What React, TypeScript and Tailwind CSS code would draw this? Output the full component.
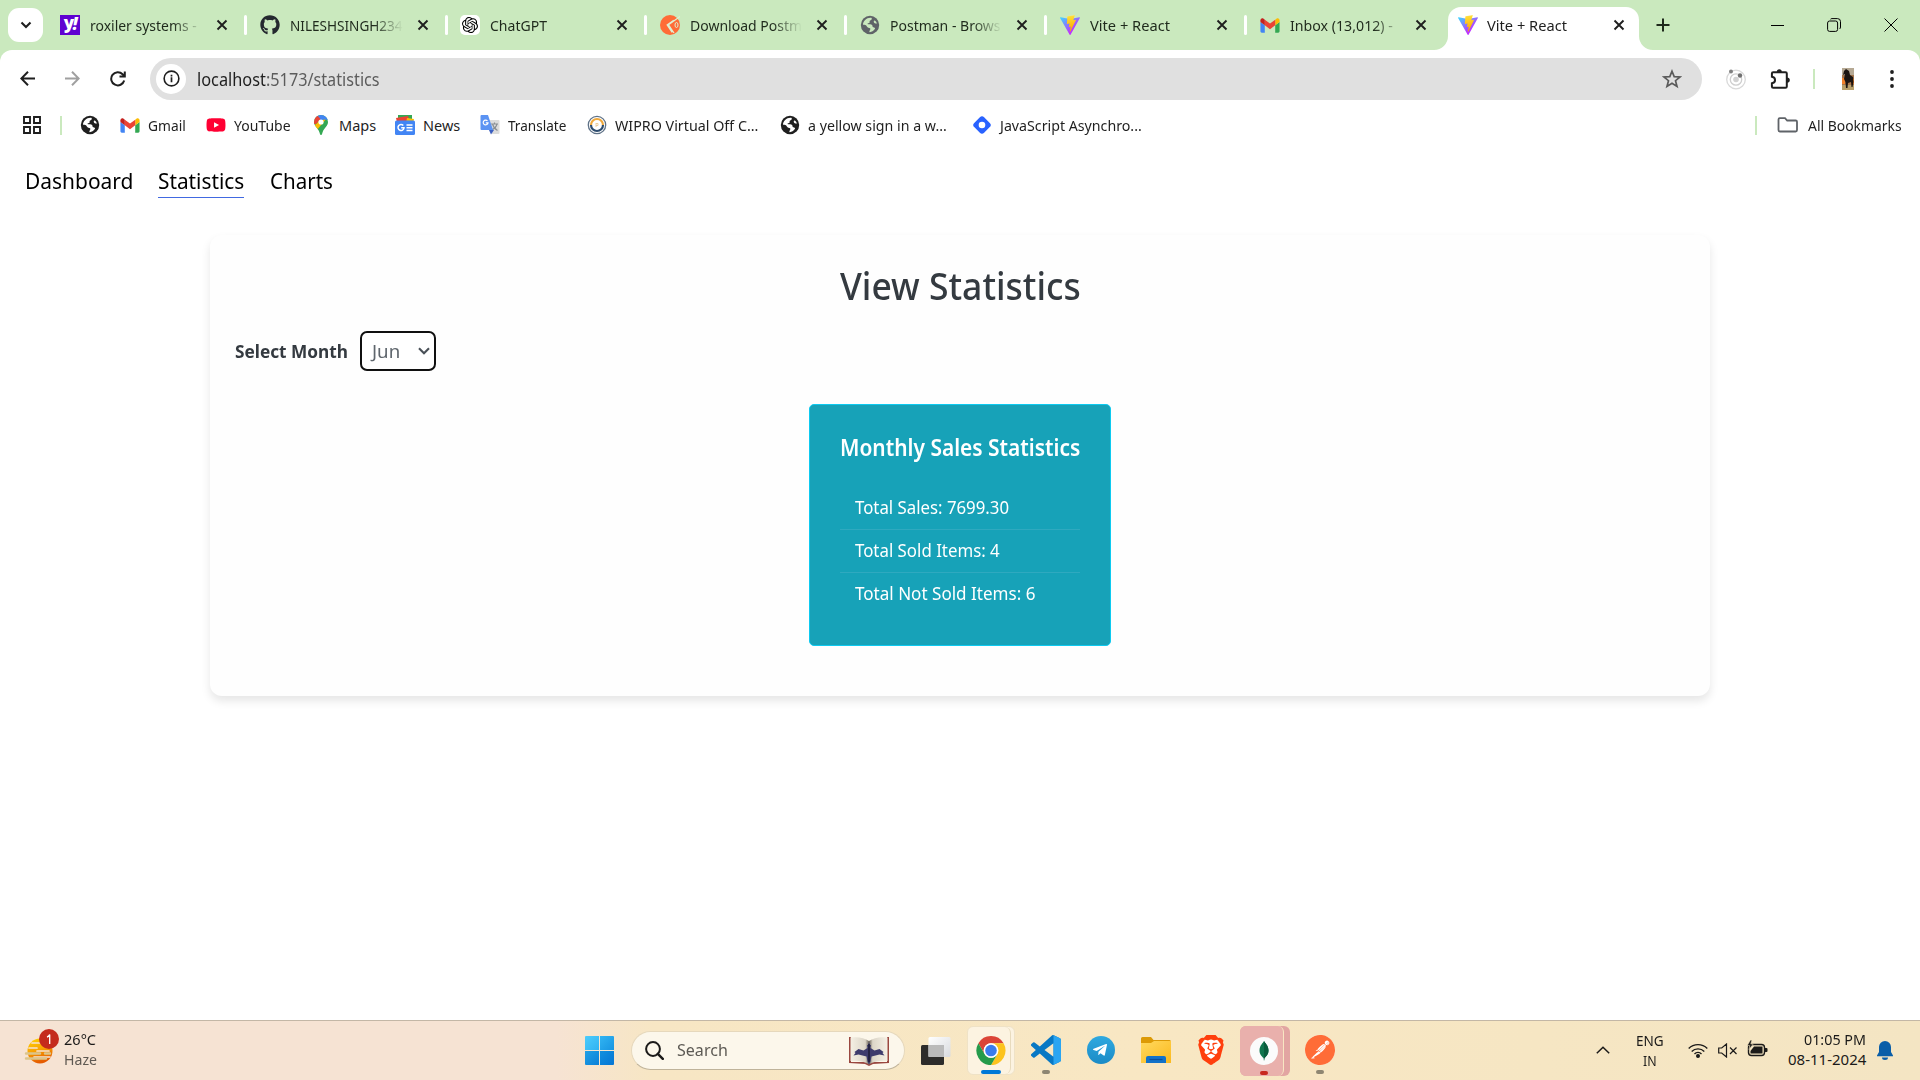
import React, { useLayoutEffect, useRef, useState } from "react";
import { FaGithub, FaTelegramPlane, FaYoutube } from "react-icons/fa";
import { SiOpenai, SiBrave, SiPostman } from "react-icons/si";

/* Single line of text condensed or stretched to an exact width. */
function Fit({ w, className = "", children }: { w: number; className?: string; children: string }) {
  const ref = useRef<HTMLSpanElement>(null);
  const [k, setK] = useState(1);
  useLayoutEffect(() => {
    if (ref.current && ref.current.offsetWidth) setK(w / ref.current.offsetWidth);
  }, [w, children]);
  return (
    <span className={`block shrink-0 whitespace-nowrap ${className}`} style={{ width: w }}>
      <span ref={ref} className="inline-block origin-left" style={{ transform: `scaleX(${k})` }}>
        {children}
      </span>
    </span>
  );
}

const Vite = () => (
  <svg viewBox="0 0 256 257" className="h-5 w-5">
    <defs>
      <linearGradient id="va" x1="-.8%" x2="57.6%" y1="7.6%" y2="78.4%">
        <stop offset="0" stopColor="#41D1FF" />
        <stop offset="1" stopColor="#BD34FE" />
      </linearGradient>
      <linearGradient id="vb" x1="43%" x2="50%" y1="2%" y2="89%">
        <stop offset="0" stopColor="#FFEA83" />
        <stop offset=".08" stopColor="#FFDD35" />
        <stop offset="1" stopColor="#FFA800" />
      </linearGradient>
    </defs>
    <path fill="url(#va)" d="M255.153 37.938L134.897 252.976c-2.483 4.44-8.862 4.466-11.382.048L.875 37.958c-2.746-4.814 1.371-10.646 6.827-9.67l120.385 21.517a6.537 6.537 0 0 0 2.322-.004l117.867-21.483c5.438-.991 9.574 4.796 6.877 9.62Z" />
    <path fill="url(#vb)" d="M185.432.063L96.44 17.501a3.268 3.268 0 0 0-2.634 3.014l-5.474 92.456a3.268 3.268 0 0 0 3.997 3.378l24.777-5.718c2.318-.535 4.413 1.507 3.936 3.838l-7.361 36.047c-.495 2.426 1.782 4.5 4.151 3.78l15.304-4.649c2.372-.72 4.652 1.36 4.15 3.788l-11.698 56.621c-.732 3.542 3.979 5.473 5.943 2.437l1.313-2.028l72.516-144.72c1.215-2.423-.88-5.186-3.54-4.672l-25.505 4.922c-2.396.462-4.435-1.77-3.759-4.114l16.646-57.705c.677-2.35-1.37-4.583-3.769-4.113Z" />
  </svg>
);

const GmailIcon = () => (
  <svg viewBox="50 42 92 66" className="h-[15px] w-5">
    <path fill="#4285f4" d="M58 108h14V74L52 59v43c0 3.32 2.69 6 6 6" />
    <path fill="#34a853" d="M120 108h14c3.32 0 6-2.69 6-6V59l-20 15" />
    <path fill="#fbbc04" d="M120 48v26l20-15v-8c0-7.42-8.47-11.65-14.4-7.2" />
    <path fill="#ea4335" d="M72 74V48l24 18 24-18v26L96 92" />
    <path fill="#c5221f" d="M52 51v8l20 15V48l-5.6-4.2c-5.94-4.45-14.4-.22-14.4 7.2" />
  </svg>
);

const Globe = ({ fill, land }: { fill: string; land: string }) => (
  <svg viewBox="0 0 20 20" className="h-5 w-5">
    <circle cx="10" cy="10" r="9.2" fill={fill} />
    <path
      fill={land}
      d="M11.3 2.8C12.1 3.3 12 4.6 11 5.1 9.8 5.6 9.5 6.1 9.6 7c.1.8-.4 1.2-1.2 1.2-.9 0-1 .6-.4 1 .6.3 1.9 0 3 .2 1.300.2 1.500.9 1.500 1.900 0 .9.6 1 1.500 1.100 1 .1 1.300.8.800 1.700-1.200 1.700-3.100 3-5 3.100-.8-.5-.4-1.500.2-2.300.7-.9.4-1.600-.6-1.900C7.700 12.600 7.200 11.900 6.600 11 5.700 9.800 4.100 9.700 3 9.800 2.900 6.200 6.800 2.300 11.300 2.800Z"
    />
    <path fill={land} d="M14.300 5.500c1.100.2 2.200 1.600 2.600 3-.8.3-2.500 0-2.900-.9-.3-.8-.5-1.700.3-2.100Z" />
  </svg>
);

const Yahoo = () => (
  <span className="flex h-5 w-5 items-center justify-center bg-[#5f01d1] font-['Open_Sans',sans-serif] text-[17px] leading-none font-extrabold tracking-[-1.5px] text-white">
    <span className="-mt-[5px]">y</span>
    <span className="-mt-[3px] italic">!</span>
  </span>
);

const CloseX = () => (
  <svg viewBox="0 0 12 12" className="h-3 w-3 shrink-0">
    <path d="M1.500 1.500l9 9M10.500 1.500l-9 9" stroke="#1f1f1f" strokeWidth="1.900" />
  </svg>
);

const PostmanTab = () => (
  <svg viewBox="0 0 20 20" className="h-5 w-5">
    <circle cx="10" cy="10" r="10" fill="#ff6c37" />
    <path d="M20 1.500L8.500 9.800l5.500 8.200M13.800 5.300L7.200 9.800l5 7.500" stroke="#e0f0d2" strokeWidth="1.300" fill="none" />
    <ellipse cx="16.500" cy="10" rx="1.500" ry="2.500" stroke="#e0f0d2" strokeWidth="1" fill="none" />
  </svg>
);

function Tab({ icon, title, w, sep = true, fade = false }: { icon: React.ReactNode; title: string; w: number; sep?: boolean; fade?: boolean }) {
  return (
    <div className="flex h-[50px] w-[200px] shrink-0 items-center pl-[13px]">
      <span className="flex h-5 w-5 shrink-0 items-center justify-center">{icon}</span>
      <div className={fade ? "ml-[10px] w-[113px] [mask-image:linear-gradient(to_right,#000_74%,transparent)]" : "ml-[10px] w-[113px]"}>
        <Fit w={w} className="text-[15px] leading-[22px] text-[#1f2a1c]">{title}</Fit>
      </div>
      <span className={sep ? "ml-[14px] flex" : "ml-[12px] flex"}><CloseX /></span>
      {sep && <span className="ml-[16px] h-5 w-[3px] shrink-0 rounded-full bg-white" />}
    </div>
  );
}

function Bookmark({ icon, title, w, gap }: { icon: React.ReactNode; title: string; w: number; gap: string }) {
  return (
    <div className={`flex shrink-0 items-center ${gap}`}>
      <span className="flex h-5 w-5 items-center justify-center">{icon}</span>
      <Fit w={w} className="ml-2 text-[14.500px] leading-[20px] text-[#1f1f1f]">{title}</Fit>
    </div>
  );
}

function BrowserTabs() {
  return (
    <div className="flex h-[50px] bg-[#cae9be]">
      <div className="flex w-[47px] shrink-0 items-center pl-2">
        <div className="flex h-[34px] w-[35px] items-center justify-center rounded-[11px] bg-white">
          <svg viewBox="0 0 12 8" className="h-2 w-3"><path d="M1.500 1.500L6 6l4.500-4.500" stroke="#1f1f1f" strokeWidth="2.100" fill="none" /></svg>
        </div>
      </div>
      <Tab icon={<Yahoo />} title="roxiler systems -" w={107} fade />
      <Tab icon={<FaGithub className="h-5 w-5 text-[#24292f]" />} title="NILESHSINGH234" w={113} fade />
      <Tab icon={<span className="flex h-5 w-5 items-center justify-center rounded-[5px] bg-white"><SiOpenai className="h-4 w-4 text-black" /></span>} title="ChatGPT" w={57} />
      <Tab icon={<PostmanTab />} title="Download Postm" w={112} fade />
      <Tab icon={<Globe fill="#5f6368" land="#cae9be" />} title="Postman - Brows" w={111} fade />
      <Tab icon={<Vite />} title="Vite + React" w={80} />
      <Tab icon={<GmailIcon />} title="Inbox (13,012) -" w={103} sep={false} fade />
      <div className="relative mt-[7px] ml-px flex h-[43px] w-[191px] shrink-0 items-center rounded-t-[13px] bg-white pb-[7px] pl-[10px]">
        <svg viewBox="0 0 14 14" className="absolute bottom-0 -left-[14px] h-[14px] w-[14px]"><path d="M14 0v14H0A14 14 0 0 0 14 0Z" fill="#fff" /></svg>
        <svg viewBox="0 0 14 14" className="absolute -right-[14px] bottom-0 h-[14px] w-[14px]"><path d="M0 0v14h14A14 14 0 0 1 0 0Z" fill="#fff" /></svg>
        <Vite />
        <Fit w={80} className="ml-[9px] text-[15px] leading-[22px] text-[#1f1f1f]">Vite + React</Fit>
        <span className="ml-[46px] flex"><CloseX /></span>
      </div>
      <div className="flex w-[48px] items-center justify-center">
        <svg viewBox="0 0 14 14" className="h-[14px] w-[14px]"><path d="M7 .5v13M.5 7h13" stroke="#1f2a1c" strokeWidth="2" /></svg>
      </div>
      <div className="ml-auto flex items-center gap-[43px] pr-[22px]">
        <span className="h-px w-[13px] bg-black" />
        <svg viewBox="0 0 14 14" className="h-[14px] w-[14px]" fill="none" stroke="#000"><rect x=".6" y="3" width="10" height="10.400" rx="2" /><path d="M3.500 1.200Q4 .6 5 .6h5.500a3 3 0 0 1 3 3V9q0 1.400-1 2" /></svg>
        <svg viewBox="0 0 14 14" className="h-[14px] w-[14px]" stroke="#000"><path d="M.5.5l13 13M13.500.5l-13 13" /></svg>
      </div>
    </div>
  );
}

function Toolbar() {
  return (
    <div className="bg-[#cae9be]">
      <div className="flex h-[58px] items-center rounded-t-[12px] bg-white pb-px pl-5">
        <svg viewBox="0 0 15 15" className="h-[15px] w-[15px]" fill="none" stroke="#1f1f1f" strokeWidth="2"><path d="M15 7.500H1.500M8 .8L1.300 7.500 8 14.200" /></svg>
        <svg viewBox="0 0 15 15" className="ml-[30px] h-[15px] w-[15px]" fill="none" stroke="#a0a0a0" strokeWidth="2"><path d="M0 7.500h13.500M7 .8l6.700 6.700L7 14.200" /></svg>
        <svg viewBox="0 0 16 16" className="ml-[30px] h-4 w-4" fill="none" stroke="#1f1f1f" strokeWidth="2"><path d="M14.200 9.500A6.600 6.600 0 1 1 12.600 3.200L14.200 5M14.800.5v5H9.500" /></svg>
        <div className="ml-[24px] flex h-[42px] w-[1552px] items-center rounded-full bg-[#e0e0e0] pl-[6px]">
          <span className="flex h-[30px] w-[30px] items-center justify-center rounded-full bg-white">
            <svg viewBox="0 0 18 18" className="h-[17px] w-[17px]"><circle cx="9" cy="9" r="7.800" fill="none" stroke="#1f1f1f" strokeWidth="1.700" /><path d="M9 7.800V13M9 5v1.800" stroke="#1f1f1f" strokeWidth="1.800" /></svg>
          </span>
          <div className="ml-[11px] flex text-[17.500px] leading-[24px]">
            <Fit w={69} className="text-[#1f1f1f]">localhost</Fit>
            <Fit w={114} className="text-[#5c5c5c]">:5173/statistics</Fit>
          </div>
          <svg viewBox="0 0 20 20" className="mr-5 ml-auto h-5 w-5" fill="none" stroke="#5a5a5a" strokeWidth="1.700"><path d="M10 2.200l2.200 5.400 5.800.4-4.500 3.700 1.500 5.700-5-3.200-5 3.200 1.500-5.700L2 8l5.800-.4Z" /></svg>
        </div>
        <svg viewBox="0 0 22 22" className="ml-[23px] h-[22px] w-[22px]">
          <circle cx="11" cy="11.500" r="9.300" fill="none" stroke="#d9d9d9" strokeWidth="1.300" />
          <circle cx="11" cy="11.500" r="5.700" fill="none" stroke="#cfcfcf" strokeWidth="1.300" />
          <circle cx="11" cy="11.500" r="2.800" fill="#d2d2d2" />
          <circle cx="6" cy="3.500" r="2" fill="#808080" />
          <circle cx="15" cy="7.500" r="2.200" fill="#707070" />
        </svg>
        <svg viewBox="0 0 22 22" className="ml-[23px] h-[22px] w-[22px]">
          <path d="M3.200 4.200h12.300q1.300 0 1.300 1.300v13q0 1.300-1.300 1.300H3.200q-1.300 0-1.300-1.300v-3.200c4.200-.6 4.200-6 0-6.600V5.500q0-1.300 1.300-1.300Z" fill="none" stroke="#1f1f1f" strokeWidth="2" />
          <path d="M6.800 4a2.500 2.700 0 0 1 5 0ZM17 9.500a2.700 2.500 0 0 1 0 5.200Z" fill="#1f1f1f" />
        </svg>
        <span className="ml-[21px] h-5 w-[2px] bg-[#cae9be]" />
        <svg viewBox="0 0 12 22" className="ml-[27px] h-[22px] w-3">
          <rect width="12" height="22" fill="#a5764e" /><rect width="12" height="7" fill="#b6a994" /><rect y="17" width="12" height="5" fill="#b9a06a" />
          <path d="M0 10h3v6H0zM9 11h3v5H9z" fill="#f2812a" />
          <path d="M2 3l2-2 3 2 1 4 3 2 .5 5-1 5h-1l-.5-5-3 1-.5 5H4l-.5-6L2 11l1-5-2 1z" fill="#1c1512" />
        </svg>
        <svg viewBox="0 0 4 18" className="ml-9 h-[18px] w-1" fill="#1f1f1f"><circle cx="2" cy="2" r="1.900" /><circle cx="2" cy="9" r="1.900" /><circle cx="2" cy="16" r="1.900" /></svg>
      </div>
      <div className="flex h-[42px] items-center bg-white pb-[8px] pl-[23px]">
        <svg viewBox="0 0 18 18" className="h-[18px] w-[18px]" fill="none" stroke="#1f1f1f" strokeWidth="1.900"><path d="M1 1h6v6H1zM11 1h6v6h-6zM1 11h6v6H1zM11 11h6v6h-6z" /></svg>
        <span className="ml-[19px] h-[19px] w-[2px] bg-[#cae9be]" />
        <span className="ml-[18px]"><Globe fill="#1f1f1f" land="#fff" /></span>
        <Bookmark gap="ml-[20px]" icon={<GmailIcon />} title="Gmail" w={38} />
        <Bookmark gap="ml-[20px]" icon={<FaYoutube className="h-[22px] w-[20px] text-[#ff0033]" />} title="YouTube" w={57} />
        <Bookmark
          gap="ml-[20px]"
          icon={
            <svg viewBox="0 0 14 20" className="h-5 w-[14px]">
              <clipPath id="pin"><path d="M7 0a7 7 0 0 1 7 7c0 4.500-4 5.500-5.500 10.500C8 19.500 7.500 20 7 20s-1-.5-1.500-2.500C4 12.500 0 11.500 0 7a7 7 0 0 1 7-7Z" /></clipPath>
              <g clipPath="url(#pin)">
                <rect width="14" height="20" fill="#34a853" />
                <path d="M0 11l6-6 6-1-9 11Z" fill="#fbbc04" />
                <path d="M5 0h9v5L9.500 4.500 6.500 6 2 2Z" fill="#4285f4" />
                <path d="M0 0h3l3.500 4L2 9H0Z" fill="#ea4335" />
              </g>
              <circle cx="7" cy="7" r="2.600" fill="#fff" />
            </svg>
          }
          title="Maps"
          w={37}
        />
        <Bookmark
          gap="ml-[19px]"
          icon={
            <svg viewBox="0 0 20 20" className="h-5 w-5">
              <path d="M3 0h14v6H3z" fill="#34a853" /><path d="M1 3l12-2 2 6H2z" fill="#ea4335" /><path d="M12 3l7 1-1 4h-7z" fill="#fbbc04" />
              <rect y="5.500" width="20" height="14.500" rx="1.500" fill="#4285f4" />
              <path d="M8.300 10.500A3 3 0 1 0 9 12.800H6.200M11.500 10h6M11.500 12.800h6M11.500 15.500h6" stroke="#fff" strokeWidth="1.500" fill="none" />
            </svg>
          }
          title="News"
          w={37}
        />
        <Bookmark
          gap="ml-[20px]"
          icon={
            <svg viewBox="0 0 20 20" className="h-5 w-5">
              <path d="M7 5h11.500q1 0 1 1v12q0 1-1 1H12z" fill="#dcdcdc" />
              <path d="M11 9h7M14.500 7.500V9M12.500 9q1 4 5 6.500M17 9q-1 4-5.500 6" stroke="#8a8f94" strokeWidth="1.100" fill="none" />
              <path d="M9 15h5l-3 4.500z" fill="#3c5fc0" />
              <path d="M1.500 0H8l5 15H1.500Q.5 15 .5 14V1q0-1 1-1Z" fill="#5b93f3" />
              <path d="M7.500 6A2.400 2.400 0 1 0 8 7.800H5.800" stroke="#fff" strokeWidth="1.200" fill="none" />
            </svg>
          }
          title="Translate"
          w={58}
        />
        <Bookmark
          gap="ml-[21px]"
          icon={
            <svg viewBox="0 0 20 20" className="h-5 w-5" fill="none">
              <circle cx="10" cy="10" r="8.700" stroke="#5f7287" strokeWidth="1.300" />
              <path d="M4 10a6 6 0 0 1 12 0" stroke="#f0a93c" strokeWidth="2.200" />
              <path d="M4 10a6 6 0 0 0 12 0" stroke="#2d4c6e" strokeWidth="2.200" />
              <path d="M9 8v4M9 8.500h2v2H9" stroke="#e9c48c" strokeWidth=".8" />
            </svg>
          }
          title="WIPRO Virtual Off C..."
          w={143}
        />
        <Bookmark gap="ml-[22px]" icon={<Globe fill="#1f1f1f" land="#fff" />} title="a yellow sign in a w..." w={139} />
        <Bookmark
          gap="ml-[25px]"
          icon={<svg viewBox="0 0 20 20" className="h-5 w-5"><rect x="3" y="3" width="14" height="14" rx="3" transform="rotate(45 10 10)" fill="#2962ff" /><circle cx="10" cy="10" r="3.300" fill="#fff" /></svg>}
          title="JavaScript Asynchro..."
          w={142}
        />
        <span className="ml-auto h-[19px] w-[2px] bg-[#cae9be]" />
        <svg viewBox="0 0 22 16" className="ml-5 h-4 w-[22px]" fill="none" stroke="#5f6368" strokeWidth="1.800"><path d="M1.500 13V2.500q0-1.300 1.300-1.300H8L10.200 3.500h8.500q1.300 0 1.300 1.300V13q0 1.500-1.300 1.500H2.800q-1.300 0-1.300-1.500Z" /></svg>
        <Fit w={94} className="mr-[18px] ml-[9px] text-[14.500px] leading-[20px] text-[#1f1f1f]">All Bookmarks</Fit>
      </div>
    </div>
  );
}

function Page() {
  const rows: [string, number][] = [
    ["Total Sales: 7699.30", 154],
    ["Total Sold Items: 4", 145],
    ["Total Not Sold Items: 6", 180],
  ];
  return (
    <main className="flex-1 bg-white">
      <nav className="flex pt-[14px] pl-[25px] text-[22.500px] leading-[33px] text-black">
        <Fit w={108}>Dashboard</Fit>
        <div className="ml-[25px] border-b border-[#4169e1]"><Fit w={86}>Statistics</Fit></div>
        <Fit w={63} className="ml-[26px]">Charts</Fit>
      </nav>
      <section className="mx-auto mt-[37px] flex h-[461px] w-[1500px] flex-col rounded-[12px] bg-[#fefefe] px-[25px] shadow-[0_5px_10px_rgba(0,0,0,0.1)]">
        <h1 className="mt-[25px] flex justify-center text-[38px] leading-[50px] font-medium text-[#343a40]">
          <Fit w={241}>View Statistics</Fit>
        </h1>
        <div className="mt-[21px] flex h-[40px] items-center">
          <Fit w={113} className="text-[18px] leading-[30px] font-bold text-[#343a40]">Select Month</Fit>
          <div className="ml-3 flex h-10 w-[76px] items-center rounded-[7px] border-2 border-[#101010] bg-white pl-[10px]">
            <Fit w={28} className="text-[18px] leading-[30px] text-[#5f666d]">Jun</Fit>
            <svg viewBox="0 0 12 8" className="ml-[18px] h-2 w-3"><path d="M1 1.200l5 5 5-5" stroke="#495057" strokeWidth="2.100" fill="none" /></svg>
          </div>
        </div>
        <div className="mx-auto mt-[33px] h-[242px] w-[302px] rounded-[5px] border border-[#0dcaf0] bg-[#17a2b8] px-[30px] pt-[27px] text-white">
          <Fit w={240} className="text-[22.500px] leading-[32px] font-semibold">Monthly Sales Statistics</Fit>
          <ul className="mt-[23px] text-[18px]">
            {rows.map(([t, w], i) => (
              <li key={t} className={i < 2 ? "h-[43px] border-b border-[#2fa9bf] pt-[8px] pl-[15px]" : "h-[43px] pt-[8px] pl-[15px]"}>
                <Fit w={w} className="leading-[24px]">{t}</Fit>
              </li>
            ))}
          </ul>
        </div>
      </section>
    </main>
  );
}

function Taskbar() {
  return (
    <footer className="flex h-[60px] items-center border-t border-[#c3b7a6] bg-[linear-gradient(90deg,#f6e3d3_0%,#f6e3d3_29%,#f7e6c4_34%,#f8e7c3_60%,#f4e5c3_100%)]">
      <div className="flex w-[585px] shrink-0 items-start pl-[24px]">
        <svg viewBox="0 0 36 36" className="-mt-[2px] h-9 w-9">
          <defs><linearGradient id="sun" x1="0" y1="0" x2=".3" y2="1"><stop offset="0" stopColor="#ffd500" /><stop offset=".5" stopColor="#f9a602" /><stop offset="1" stopColor="#e55c00" /></linearGradient></defs>
          <circle cx="16" cy="22" r="12.500" fill="url(#sun)" />
          <path d="M8 14h8M5 19h8M13 22h12M10 28h16" stroke="#f6e3d3" strokeWidth="1.700" strokeLinecap="round" />
          <path d="M2 24.500h14M21 24.500h5M2 29.500h20" stroke="#dcc58a" strokeWidth="2.400" strokeLinecap="round" />
          <circle cx="25" cy="10" r="10" fill="#c42b1c" />
          <path d="M23 8q2-.5 2.700-2.500V15" stroke="#fff" strokeWidth="1.300" fill="none" />
        </svg>
        <div className="-mt-[2px] mb-[2px] ml-1 text-[15px] leading-5">
          <Fit w={32} className="text-[#1b1a19]">26°C</Fit>
          <Fit w={33} className="text-[#5f5952]">Haze</Fit>
        </div>
      </div>
      <div className="grid h-[29px] w-[29px] shrink-0 grid-cols-2 gap-px overflow-hidden rounded-[1px]">
        <span className="bg-linear-to-br from-[#4cccfb] to-[#2fb2f2]" />
        <span className="bg-linear-to-br from-[#31b4f2] to-[#1795e2]" />
        <span className="bg-linear-to-br from-[#1fa0e6] to-[#0b80d8]" />
        <span className="bg-linear-to-br from-[#1390df] to-[#0675d4]" />
      </div>
      <div className="mb-px ml-[17px] flex h-[39px] w-[274px] shrink-0 items-center rounded-full border border-[#e6d8bc] border-b-[#bfb39a] bg-[#fcf7eb] pl-[13px]">
        <svg viewBox="0 0 19 19" className="h-[19px] w-[19px]" fill="none" stroke="#1b1a19"><circle cx="8" cy="8" r="6.900" strokeWidth="2" /><path d="M12.800 12.800l5 5" strokeWidth="2.500" strokeLinecap="round" /></svg>
        <Fit w={51} className="ml-[13px] text-[17px] leading-[24px] text-[#5d5a54]">Search</Fit>
        <svg viewBox="0 0 40 30" className="mt-px ml-[121px] h-[30px] w-10">
          <defs><linearGradient id="pg"><stop offset="0" stopColor="#f5f0e4" /><stop offset=".4" stopColor="#dcd6c8" /><stop offset=".5" stopColor="#6a6358" /><stop offset=".6" stopColor="#dcd6c8" /><stop offset="1" stopColor="#f5f0e4" /></linearGradient></defs>
          <path d="M0 1h2v25h36V1h2v26l-16 1-4 2-4-2L0 27Z" fill="#9a4840" />
          <path d="M1.500 1.500Q13 0 20 5 27 0 38.500 1.500v23.500Q27 24 20 28.500 13 24 1.500 25Z" fill="url(#pg)" />
          <path d="M20 6l1 3h1l-.5 3 4 2.500 5-1.500 4 3-1 1 2 2.500-5-1-4 1-4 1-1 5-1.500 3-1.500-3-1-5-4-1-4-1-5 1 2-2.500-1-1 4-3 5 1.500 4-2.500-.5-3h1Z" fill="#3d3b6c" />
          <path d="M20 8v18" stroke="#1d1b35" strokeWidth="1.500" />
        </svg>
      </div>
      <svg viewBox="0 0 30 28" className="ml-4 h-7 w-[30px] shrink-0">
        <defs><linearGradient id="tv" x1="0" y1="0" x2="1" y2="1"><stop offset="0" stopColor="#fff" /><stop offset="1" stopColor="#d8dade" /></linearGradient></defs>
        <rect y="8" width="23" height="20" rx="1.500" fill="#2d2c2a" /><rect x="7.500" width="22" height="20" rx="1.500" fill="url(#tv)" /><path d="M7.500 8H23v12H7.500z" fill="#bababa" />
      </svg>
      <div className="mb-px ml-4 flex h-[49px] w-[48px] shrink-0 rounded-md border border-[#efe2c6] bg-[#fcf3e1]">
        <div className="flex w-[43px] flex-col items-center rounded-md border-r border-[#e8dbbd] pt-[9px]">
          <svg viewBox="0 0 48 48" className="ml-[4px] h-[30px] w-[30px]">
            <path fill="#db4437" d="M24 12H44.780A24 24 0 0 0 3.210 12L13.600 30A12 12 0 0 1 24 12Z" />
            <path fill="#fcc31e" d="M24 12H44.780A24 24 0 0 1 24 48L34.400 30A12 12 0 0 0 24 12Z" />
            <path fill="#259b4b" d="M24 48A24 24 0 0 1 3.210 12L13.600 30A12 12 0 0 0 34.400 30L24 48Z" />
            <circle cx="24" cy="24" r="12" fill="#fff" /><circle cx="24" cy="24" r="9.500" fill="#3a7cec" />
          </svg>
          <span className="mt-[5px] ml-[4px] h-1 w-5 rounded-full bg-[#0078d7]" />
        </div>
      </div>
      <div className="mb-px ml-[16px] flex w-[30px] shrink-0 flex-col items-center pt-[9px]">
        <svg viewBox="0 0 24 24" className="h-[30px] w-[30px]">
          <path fill="#0878c4" d="M23.150 2.587L18.210.21a1.494 1.494 0 0 0-1.705.29l-9.460 8.630-4.120-3.128a.999.999 0 0 0-1.276.057L.327 7.261A1 1 0 0 0 .326 8.740L3.899 12 .326 15.260a1 1 0 0 0 .001 1.479L1.650 17.940a.999.999 0 0 0 1.276.057l4.120-3.128 9.460 8.630a1.492 1.492 0 0 0 1.704.29l4.942-2.377A1.500 1.500 0 0 0 24 20.060V3.939a1.500 1.500 0 0 0-.85-1.352zm-5.146 14.861L10.826 12l7.178-5.448v10.896z" />
          <path fill="#2aa5f2" d="M18 .2l5.200 2.400q.8.500.8 1.400v16q0 1-.8 1.400L18 23.800Z" />
        </svg>
        <span className="mt-[5px] h-1 w-2 rounded-full bg-[#8e8672]" />
      </div>
      <span className="mb-px ml-[26px] flex h-7 w-7 shrink-0 items-center justify-center rounded-full bg-linear-to-b from-[#2fa9e0] to-[#1b8bc6]">
        <FaTelegramPlane className="mr-[2px] h-[16px] w-[16px] text-white" />
      </span>
      <svg viewBox="0 0 30 27" className="ml-[26px] h-[27px] w-[30px] shrink-0">
        <defs><linearGradient id="fd" x1="0" y1="0" x2="1" y2="1"><stop offset="0" stopColor="#ffd95f" /><stop offset="1" stopColor="#fbb91d" /></linearGradient></defs>
        <path d="M0 1.500Q0 0 1.500 0H10l2.500 3H28.500Q30 3 30 4.500V12H0Z" fill="#dc9a06" />
        <path d="M0 6h10l3-2h17v21.500q0 .5-.5.500H.5Q0 26 0 25.500Z" fill="url(#fd)" />
        <path d="M5 26v-5q0-2 2-2h16q2 0 2 2v5Z" fill="#1272c9" /><path d="M8.500 22.500h13" stroke="#0a4f9c" strokeWidth="1.200" />
      </svg>
      <div className="mb-px ml-[25px] grid h-[30px] w-[30px] shrink-0 place-items-center">
        <svg viewBox="0 0 30 30" className="h-[30px] w-[30px] [grid-area:1/1]"><path d="M9 5h12l4 5-2 11-8 6-8-6L5 10Z" fill="#fff" /></svg>
        <SiBrave className="h-[30px] w-[30px] text-[#ff3f0d] [grid-area:1/1]" />
      </div>
      <div className="ml-[14px] flex h-[50px] w-[50px] shrink-0 rounded-md bg-[#e2a5a2]">
        <div className="flex w-[44px] flex-col items-center rounded-md border-r-[1.500px] border-[#f8e7c3] bg-[#e9b0ac] pt-[11px]">
          <span className="ml-[5px] flex h-7 w-7 items-center justify-center rounded-full bg-[#fbfbfb]">
            <svg viewBox="0 0 10 20" className="h-5 w-[10px]"><path d="M5 0c1 2 4.500 4.500 4.500 9.500 0 4-2.500 6-4 7.500L5 20l-.5-3C3 15.500.5 13.500.5 9.500.5 4.500 4 2 5 0Z" fill="#10754d" /><path d="M5 0c1 2 4.500 4.500 4.500 9.500 0 4-2.500 6-4 7.500L5 20Z" fill="#0a5c3c" /></svg>
          </span>
          <span className="mt-[6px] ml-[5px] h-1 w-2 rounded-full bg-[#c8281e]" />
        </div>
      </div>
      <div className="mb-px ml-[15px] flex w-[30px] shrink-0 flex-col items-center pt-[9px]">
        <span className="h-[30px] w-[30px] rounded-full bg-white"><SiPostman className="h-[30px] w-[30px] text-[#ff6c37]" /></span>
        <span className="mt-[5px] h-1 w-2 rounded-full bg-[#8e8672]" />
      </div>
      <div className="mb-px ml-auto flex items-center pr-[27px] text-[15px] leading-5 text-[#1b1a19]">
        <svg viewBox="0 0 14 8" className="h-2 w-[14px]"><path d="M.8 7.200L7 1.200l6.200 6" stroke="#1b1a19" strokeWidth="1.500" fill="none" /></svg>
        <div className="mb-px ml-[26px] flex w-[28px] flex-col items-center"><Fit w={28}>ENG</Fit><Fit w={14}>IN</Fit></div>
        <svg viewBox="0 0 20 15" className="ml-[24px] h-[15px] w-5" fill="none" stroke="#1b1a19" strokeWidth="1.400"><path d="M.7 5.500a13.200 13.200 0 0 1 18.600 0M3.700 8.400a9 9 0 0 1 12.600 0M6.500 11a5 5 0 0 1 7 0" /><circle cx="10" cy="13" r="1.300" fill="#1b1a19" /></svg>
        <svg viewBox="0 0 20 15" className="ml-[10px] h-[15px] w-5" fill="none" stroke="#1b1a19" strokeWidth="1.200"><path d="M.7 5h3L8.500 1v13l-4.800-4h-3ZM12 4.500l6.500 6.500M18.500 4.500L12 11" /></svg>
        <svg viewBox="0 0 21 17" className="mb-1 ml-[9px] h-[17px] w-[21px]"><rect x="1.500" y="4.500" width="16" height="11" rx="3" fill="none" stroke="#1b1a19" strokeWidth="1.400" /><path d="M7 6.500h8.500v7H3.500V11Z" fill="#1b1a19" /><path d="M18 8h1.500q1 0 1 1v2q0 1-1 1H18z" fill="#1b1a19" /><path d="M3.500 0L.3 5.500h2.500L2 9.500 6.200 4H3.800L4.800 0Z" fill="#1b1a19" stroke="#f5e6c3" strokeWidth=".5" /></svg>
        <div className="mb-[3px] ml-[20px] flex flex-col items-end"><Fit w={62}>01:05 PM</Fit><Fit w={78}>08-11-2024</Fit></div>
        <svg viewBox="0 0 16 19" className="ml-[11px] h-[19px] w-4" fill="#0a5ea8"><path d="M8 0a6 6 0 0 1 6 6v5l2 3.500v.8H0v-.8L2 11V6a6 6 0 0 1 6-6ZM5 16.500h6a3 2.500 0 0 1-6 0Z" /></svg>
      </div>
    </footer>
  );
}

export default function App() {
  return (
    <div className="flex h-[1080px] w-[1920px] flex-col overflow-hidden bg-white font-['Noto_Sans','Open_Sans',sans-serif]">
      <BrowserTabs />
      <Toolbar />
      <Page />
      <Taskbar />
    </div>
  );
}
